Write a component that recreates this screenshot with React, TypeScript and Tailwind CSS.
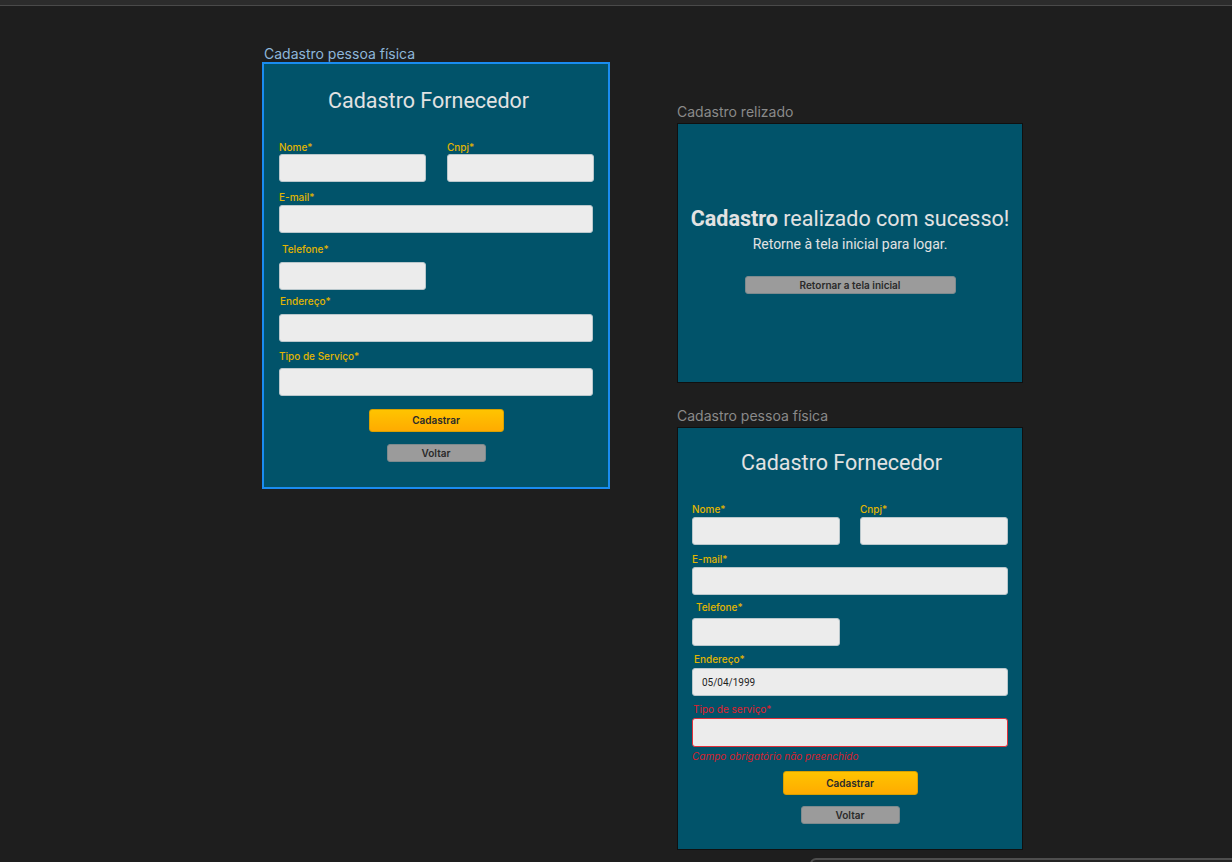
import React from "react";

function Lbl({ children, className = "" }: { children: React.ReactNode; className?: string }) {
  return (
    <div className={`h-[12px] text-[10px] leading-[12px] font-medium text-[#e2b500] ${className}`}>
      {children}
    </div>
  );
}

function Inp({ className = "", children }: { className?: string; children?: React.ReactNode }) {
  return (
    <div className={`h-[28px] rounded-[3px] bg-[#ececec] border border-[#b9c7cc] ${className}`}>{children}</div>
  );
}

export default function App() {
  return (
    <div className="relative w-[1232px] h-[862px] overflow-hidden bg-[#1e1e1e] font-[Inter,_sans-serif]">
      <div className="h-[6px] bg-[#2c2c2c] border-b border-[#4a4a4a]" />

      {/* Frame 1 (selected) */}
      <div className="absolute left-[262px] top-[46px] flex flex-col">
        <div className="h-[16px] pl-[2px] text-[14px] leading-[16px] text-[#8db6da]">Cadastro pessoa física</div>
        <div className="w-[348px] h-[427px] border-2 border-[#1a8cf0] bg-[#01536a] flex flex-col">
          <div className="pt-[24px] pl-[64px] h-[49px] text-[21.5px] leading-[25px] text-[#e2e2e2] font-[Roboto,_sans-serif]">
            Cadastro Fornecedor
          </div>
          <div className="px-[15px] flex flex-col">
            <div className="mt-[28px] grid grid-cols-[147px_147px] gap-x-[21px]">
              <div className="flex flex-col">
                <Lbl>Nome*</Lbl>
                <Inp className="mt-[1px]" />
              </div>
              <div className="flex flex-col">
                <Lbl>Cnpj*</Lbl>
                <Inp className="mt-[1px]" />
              </div>
            </div>
            <Lbl className="mt-[9px]">E-mail*</Lbl>
            <Inp className="mt-[2px]" />
            <Lbl className="mt-[10px] pl-[3px]">Telefone*</Lbl>
            <Inp className="mt-[7px] w-[147px]" />
            <Lbl className="mt-[5px] pl-[1px]">Endereço*</Lbl>
            <Inp className="mt-[7px]" />
            <Lbl className="mt-[8px]">Tipo de Serviço*</Lbl>
            <Inp className="mt-[6px]" />
          </div>
          <div className="mt-[13px] mx-auto w-[135px] h-[23px] rounded-[3px] bg-gradient-to-b from-[#ffc400] to-[#ffab00] border border-[#d9a000] flex items-center justify-center text-[10px] font-semibold text-[#2a2a2a]">
            Cadastrar
          </div>
          <div className="mt-[12px] mx-auto w-[99px] h-[18px] rounded-[3px] bg-[#9b9b9b] border border-[#7d8a8e] flex items-center justify-center text-[10px] font-semibold text-[#2a2a2a]">
            Voltar
          </div>
        </div>
      </div>

      {/* Frame 2 */}
      <div className="absolute left-[677px] top-[104px] flex flex-col">
        <div className="h-[16px] text-[14px] leading-[16px] text-[#8a8a8a]">Cadastro relizado</div>
        <div className="mt-[3px] w-[346px] h-[260px] border border-[#101010] bg-[#01536a] flex flex-col items-center">
          <div className="mt-[82px] h-[25px] text-[21.5px] leading-[25px] text-[#e2e2e2] font-[Roboto,_sans-serif]">
            <span className="font-bold">Cadastro</span> realizado com sucesso!
          </div>
          <div className="mt-[5px] h-[17px] text-[14px] leading-[17px] text-[#e2e2e2] font-[Roboto,_sans-serif]">
            Retorne à tela inicial para logar.
          </div>
          <div className="mt-[23px] w-[211px] h-[18px] rounded-[3px] bg-[#9b9b9b] border border-[#7d8a8e] flex items-center justify-center text-[10px] font-semibold text-[#2a2a2a]">
            Retornar a tela inicial
          </div>
        </div>
      </div>

      {/* Frame 3 */}
      <div className="absolute left-[677px] top-[408px] flex flex-col">
        <div className="h-[16px] text-[14px] leading-[16px] text-[#8a8a8a]">Cadastro pessoa física</div>
        <div className="mt-[3px] w-[346px] h-[423px] border border-[#101010] bg-[#01536a] flex flex-col">
          <div className="pt-[22px] pl-[63px] h-[47px] text-[21.5px] leading-[25px] text-[#e2e2e2] font-[Roboto,_sans-serif]">
            Cadastro Fornecedor
          </div>
          <div className="px-[14px] flex flex-col">
            <div className="mt-[28px] grid grid-cols-[148px_148px] gap-x-[20px]">
              <div className="flex flex-col">
                <Lbl>Nome*</Lbl>
                <Inp className="mt-[2px]" />
              </div>
              <div className="flex flex-col">
                <Lbl>Cnpj*</Lbl>
                <Inp className="mt-[2px]" />
              </div>
            </div>
            <Lbl className="mt-[8px]">E-mail*</Lbl>
            <Inp className="mt-[2px]" />
            <Lbl className="mt-[6px] pl-[4px]">Telefone*</Lbl>
            <Inp className="mt-[5px] w-[148px]" />
            <Lbl className="mt-[7px] pl-[2px]">Endereço*</Lbl>
            <Inp className="mt-[3px] flex items-center pl-[9px]">
              <span className="text-[10px] text-[#1e1e1e] font-[Roboto,_sans-serif]">05/04/1999</span>
            </Inp>
            <div className="mt-[7px] h-[12px] pl-[1px] text-[10px] leading-[12px] text-[#e0202c]">Tipo de serviço*</div>
            <div className="mt-[3px] h-[29px] rounded-[3px] bg-[#ececec] border border-[#e0303a]" />
            <div className="mt-[3px] h-[12px] text-[10px] leading-[12px] italic text-[#d8202c]">
              Campo obrigatório não preenchido
            </div>
          </div>
          <div className="mt-[9px] mx-auto w-[135px] h-[24px] rounded-[3px] bg-gradient-to-b from-[#ffc400] to-[#ffab00] border border-[#d9a000] flex items-center justify-center text-[10px] font-semibold text-[#2a2a2a]">
            Cadastrar
          </div>
          <div className="mt-[11px] mx-auto w-[99px] h-[18px] rounded-[3px] bg-[#9b9b9b] border border-[#7d8a8e] flex items-center justify-center text-[10px] font-semibold text-[#2a2a2a]">
            Voltar
          </div>
        </div>
      </div>

      {/* bottom toolbar peeking in */}
      <div className="absolute left-[810px] top-[858px] w-[440px] h-[40px] rounded-[6px] border-2 border-[#4e4e4e] bg-[#242424]" />
    </div>
  );
}
